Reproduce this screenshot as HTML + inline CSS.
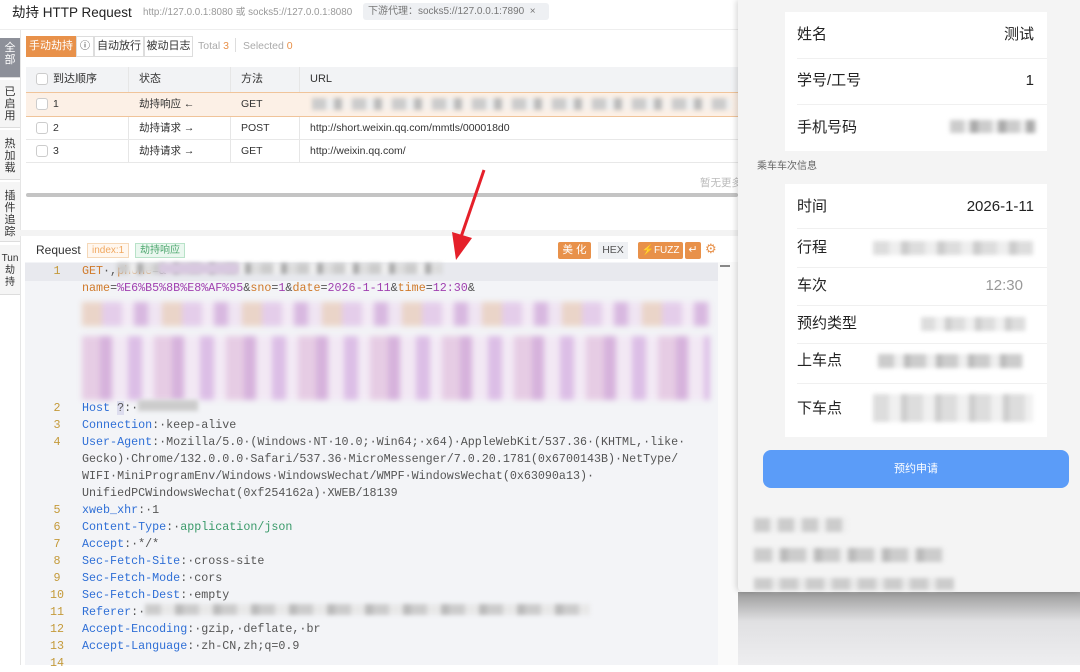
<!DOCTYPE html>
<html><head><meta charset="utf-8">
<style>
*{box-sizing:border-box;margin:0;padding:0}
body{width:1080px;height:665px;overflow:hidden;background:#fff;font-family:"Liberation Sans","Noto Sans CJK SC",sans-serif;position:relative;color:#333}
.abs{position:absolute}
.side div{position:absolute;left:0;width:20px;font-size:11px;line-height:12px;text-align:center;color:#333;background:#f5f5f5;border-bottom:1px solid #ddd;padding-top:4px}
.btn{position:absolute;top:36px;height:21px;font-size:11px;line-height:19px;border:1px solid #ddd;background:#fff;text-align:center;color:#333}
.th{position:absolute;font-size:11px;line-height:14px;color:#333}
.cb{position:absolute;width:12px;height:12px;border:1px solid #ccc;border-radius:3px;background:#fff}
.row{position:absolute;left:26px;width:712px;border-bottom:1px solid #e8e8e8;font-size:10.5px}
.row span{position:absolute;top:5px;line-height:13px}
.code{position:absolute;left:25px;top:262px;width:693px;height:403px;background:#f3f4f7;font-family:"Liberation Mono",monospace;font-size:11.7px;line-height:17px;color:#555}
.ln{position:absolute;left:22px;width:20px;text-align:center;color:#c49a3a}
.tx{position:absolute;left:57px;white-space:pre}
.k{color:#2f6fd6}
.g{color:#3a9a6a}
.o{color:#d07a2a}
.p{color:#a040b0}
.blur{position:absolute;filter:blur(2px)}
.card{position:absolute;left:785px;width:262px;background:#fff}
.lab{position:absolute;left:12px;font-size:15px;line-height:20px;color:#222}
.val{position:absolute;right:13px;font-size:15px;line-height:20px;color:#222}
.sep{position:absolute;left:12px;right:0;height:1px;background:#f0f0f0}
</style></head><body>
<!-- title -->
<div class="abs" style="left:12px;top:4px;font-size:13.5px;line-height:18px;color:#222">劫持 HTTP Request</div>
<div class="abs" style="left:143px;top:6px;font-size:9.8px;line-height:13px;color:#999;white-space:nowrap">http://127.0.0.1:8080 或 socks5://127.0.0.1:8080</div>
<div class="abs" style="left:363px;top:3px;height:17px;width:186px;background:#eef0f3;border-radius:3px;font-size:10px;color:#777;line-height:17px;padding-left:5px;white-space:nowrap">下游代理：socks5://127.0.0.1:7890 &nbsp;×</div>
<div class="abs" style="left:0;top:29px;width:738px;height:1px;background:#eee"></div>
<!-- sidebar -->
<div class="side">
<div style="top:38px;height:40px;background:#8d9099;color:#fff">全<br>部</div>
<div style="top:80px;height:48px;padding-top:6px">已<br>启<br>用</div>
<div style="top:130px;height:50px;padding-top:8px">热<br>加<br>载</div>
<div style="top:182px;height:60px;padding-top:8px">插<br>件<br>追<br>踪</div>
<div style="top:245px;height:50px;padding-top:8px;font-size:10px">Tun<br>劫<br>持</div>
</div>
<div class="abs" style="left:20px;top:30px;width:1px;height:635px;background:#e5e5e5"></div>
<!-- toolbar -->
<div class="btn" style="left:26px;width:50px;background:#e8914a;color:#fff;border-color:#e8914a">手动劫持</div>
<div class="btn" style="left:76px;width:18px;font-size:10px">ⓘ</div>
<div class="btn" style="left:94px;width:50px">自动放行</div>
<div class="btn" style="left:144px;width:49px">被动日志</div>
<div class="abs" style="left:198px;top:40px;font-size:10.5px;color:#aaa">Total <span style="color:#e8914a">3</span></div>
<div class="abs" style="left:235px;top:38px;width:1px;height:14px;background:#ddd"></div>
<div class="abs" style="left:243px;top:40px;font-size:10.5px;color:#aaa">Selected <span style="color:#e8914a">0</span></div>
<!-- table -->
<div class="abs" style="left:26px;top:67px;width:712px;height:25px;background:#f2f3f5"></div>
<div class="cb" style="left:36px;top:73px"></div>
<div class="th" style="left:53px;top:72px">到达顺序</div>
<div class="th" style="left:139px;top:72px">状态</div>
<div class="th" style="left:241px;top:72px">方法</div>
<div class="th" style="left:310px;top:72px">URL</div>
<div class="abs" style="left:128px;top:67px;width:1px;height:96px;background:#e6e6e6"></div>
<div class="abs" style="left:230px;top:67px;width:1px;height:96px;background:#e6e6e6"></div>
<div class="abs" style="left:299px;top:67px;width:1px;height:96px;background:#e6e6e6"></div>
<div class="row" style="top:92px;height:25px;background:#fcf0e6;border:1px solid #f0c49a;border-width:1px 0"><div class="cb" style="left:10px;top:5px"></div><span style="left:27px">1</span><span style="left:113px">劫持响应 ←</span><span style="left:215px">GET</span>
<div class="blur" style="left:286px;top:5px;width:420px;height:12px;background:repeating-linear-gradient(90deg,#ccc 0 14px,#eee 14px 22px,#bbb 22px 30px,#f5f0ec 30px 40px)"></div></div>
<div class="row" style="top:117px;height:23px"><div class="cb" style="left:10px;top:5px"></div><span style="left:27px">2</span><span style="left:113px">劫持请求 →</span><span style="left:215px">POST</span><span style="left:284px">http://short.weixin.qq.com/mmtls/000018d0</span></div>
<div class="row" style="top:140px;height:23px"><div class="cb" style="left:10px;top:5px"></div><span style="left:27px">3</span><span style="left:113px">劫持请求 →</span><span style="left:215px">GET</span><span style="left:284px">http://weixin.qq.com/</span></div>
<div class="abs" style="left:700px;top:175px;font-size:10.5px;color:#bbb">暂无更多</div>
<div class="abs" style="left:26px;top:193px;width:712px;height:4px;background:#c4c4c4;border-radius:2px"></div>
<div class="abs" style="left:20px;top:230px;width:718px;height:6px;background:#f3f3f3"></div>
<!-- request header -->
<div class="abs" style="left:36px;top:243px;font-size:12px;color:#333">Request</div>
<div class="abs" style="left:87px;top:243px;height:15px;padding:0 4px;border:1px solid #f5d8b8;background:#fff7ef;color:#f0a860;font-size:10px;line-height:13px">index:1</div>
<div class="abs" style="left:135px;top:243px;height:15px;padding:0 4px;border:1px solid #b8e2c8;background:#eaf7ef;color:#50a870;font-size:10px;line-height:13px">劫持响应</div>
<div class="abs" style="left:558px;top:242px;width:33px;height:17px;background:#e8914a;color:#fff;font-size:10.5px;text-align:center;line-height:17px;border-radius:2px">美 化</div>
<div class="abs" style="left:598px;top:242px;width:30px;height:17px;background:#eef0f3;color:#555;font-size:10.5px;text-align:center;line-height:17px">HEX</div>
<div class="abs" style="left:638px;top:242px;width:45px;height:17px;background:#e8914a;color:#fff;font-size:10px;text-align:center;line-height:17px;border-radius:2px">⚡FUZZ</div>
<div class="abs" style="left:685px;top:242px;width:16px;height:17px;background:#e8914a;color:#fff;font-size:11px;text-align:center;line-height:17px;border-radius:2px">↵</div>
<div class="abs" style="left:705px;top:241px;color:#e8914a;font-size:13px">⚙</div>
<!-- code -->
<div class="code">
<div class="abs" style="left:0;top:1px;width:693px;height:18px;background:#e8e9ee"></div>
<div class="ln" style="top:1px">1</div>
<div class="tx" style="top:1px"><span class="o">GET</span>·,<span class="blur" style="display:inline-block;width:325px;height:11px;vertical-align:middle;background:repeating-linear-gradient(90deg,#ccc 0 12px,#eee 12px 20px,#aaa 20px 26px,#ddd 26px 36px)"></span><span class="o">phone</span>=<span class="blur" style="display:inline-block;width:80px;height:11px;vertical-align:middle;background:#d8c8e0"></span>&amp;</div>
<div class="tx" style="top:18px"><span class="o">name</span>=<span class="p">%E6%B5%8B%E8%AF%95</span>&amp;<span class="o">sno</span>=<span class="p">1</span>&amp;<span class="o">date</span>=<span class="p">2026-1-11</span>&amp;<span class="o">time</span>=<span class="p">12:30</span>&amp;</div>
<div class="blur" style="left:57px;top:40px;width:628px;height:24px;filter:blur(3px);background:repeating-linear-gradient(90deg,#ead4c8 0 20px,#e4cdea 20px 40px,#f3eaf5 40px 52px,#d8b8e0 52px 66px,#efe4f2 66px 80px)"></div>
<div class="blur" style="left:57px;top:74px;width:628px;height:64px;filter:blur(3px);background:repeating-linear-gradient(90deg,#e6cce4 0 18px,#d6b2dc 18px 30px,#f2e8f4 30px 46px,#dcbee6 46px 60px,#f3eaf5 60px 72px)"></div>
<div class="ln" style="top:138px">2</div><div class="tx" style="top:138px"><span class="k">Host</span> <span style="background:#dde">?</span>:·<span class="blur" style="display:inline-block;width:60px;height:11px;vertical-align:middle;background:#ccc"></span></div>
<div class="ln" style="top:155px">3</div><div class="tx" style="top:155px"><span class="k">Connection</span>:·keep-alive</div>
<div class="ln" style="top:172px">4</div><div class="tx" style="top:172px"><span class="k">User-Agent</span>:·Mozilla/5.0·(Windows·NT·10.0;·Win64;·x64)·AppleWebKit/537.36·(KHTML,·like·</div>
<div class="tx" style="top:189px">Gecko)·Chrome/132.0.0.0·Safari/537.36·MicroMessenger/7.0.20.1781(0x6700143B)·NetType/</div>
<div class="tx" style="top:206px">WIFI·MiniProgramEnv/Windows·WindowsWechat/WMPF·WindowsWechat(0x63090a13)·</div>
<div class="tx" style="top:223px">UnifiedPCWindowsWechat(0xf254162a)·XWEB/18139</div>
<div class="ln" style="top:240px">5</div><div class="tx" style="top:240px"><span class="k">xweb_xhr</span>:·1</div>
<div class="ln" style="top:257px">6</div><div class="tx" style="top:257px"><span class="k">Content-Type</span>:·<span class="g">application/json</span></div>
<div class="ln" style="top:274px">7</div><div class="tx" style="top:274px"><span class="k">Accept</span>:·*/*</div>
<div class="ln" style="top:291px">8</div><div class="tx" style="top:291px"><span class="k">Sec-Fetch-Site</span>:·cross-site</div>
<div class="ln" style="top:308px">9</div><div class="tx" style="top:308px"><span class="k">Sec-Fetch-Mode</span>:·cors</div>
<div class="ln" style="top:325px">10</div><div class="tx" style="top:325px"><span class="k">Sec-Fetch-Dest</span>:·empty</div>
<div class="ln" style="top:342px">11</div><div class="tx" style="top:342px"><span class="k">Referer</span>:·<span class="blur" style="display:inline-block;width:445px;height:11px;vertical-align:middle;background:repeating-linear-gradient(90deg,#ccc 0 16px,#e8e8e8 16px 30px,#bbb 30px 38px)"></span></div>
<div class="ln" style="top:359px">12</div><div class="tx" style="top:359px"><span class="k">Accept-Encoding</span>:·gzip,·deflate,·br</div>
<div class="ln" style="top:376px">13</div><div class="tx" style="top:376px"><span class="k">Accept-Language</span>:·zh-CN,zh;q=0.9</div>
<div class="ln" style="top:393px">14</div>
</div>
<div class="abs" style="left:718px;top:262px;width:20px;height:403px;background:#fafafa"></div>
<div class="abs" style="left:720px;top:265px;width:10px;height:2px;background:#888"></div>
<!-- red arrow -->
<svg class="abs" style="left:440px;top:160px" width="60" height="110"><line x1="44" y1="10" x2="20" y2="80" stroke="#e5202a" stroke-width="3"/><polygon points="12,72 32,78 16,100" fill="#e5202a"/></svg>
<!-- right panel -->
<div class="abs" style="left:738px;top:592px;width:342px;height:73px;background:linear-gradient(#9a9a9a,#e0e0e2 40%,#eeeef0)"></div>
<div class="abs" style="left:738px;top:0;width:342px;height:592px;background:#f4f4f4;border-bottom-left-radius:6px;box-shadow:-2px 0 6px rgba(0,0,0,.15)"></div>
<div class="card" style="top:12px;height:139px">
<div class="lab" style="top:13px">姓名</div><div class="val" style="top:13px">测试</div><div class="sep" style="top:46px"></div>
<div class="lab" style="top:59px">学号/工号</div><div class="val" style="top:59px">1</div><div class="sep" style="top:92px"></div>
<div class="lab" style="top:106px">手机号码</div><div class="blur" style="left:165px;top:108px;width:86px;height:13px;background:repeating-linear-gradient(90deg,#ccc 0 14px,#eee 14px 20px,#aaa 20px 28px)"></div>
</div>
<div class="abs" style="left:757px;top:157px;font-size:10px;color:#666">乘车车次信息</div>
<div class="card" style="top:184px;height:253px">
<div class="lab" style="top:13px">时间</div><div class="val" style="top:13px">2026-1-11</div><div class="sep" style="top:44px"></div>
<div class="lab" style="top:54px">行程</div><div class="blur" style="left:88px;top:57px;width:160px;height:14px;background:repeating-linear-gradient(90deg,#ddd 0 16px,#eee 16px 28px,#ccc 28px 36px)"></div><div class="sep" style="top:83px"></div>
<div class="lab" style="top:92px">车次</div><div class="val" style="top:92px;right:24px;color:#999">12:30</div><div class="sep" style="top:121px"></div>
<div class="lab" style="top:130px">预约类型</div><div class="blur" style="left:136px;top:133px;width:105px;height:14px;background:repeating-linear-gradient(90deg,#ddd 0 14px,#f0f0f0 14px 24px,#ccc 24px 30px)"></div><div class="sep" style="top:159px"></div>
<div class="lab" style="top:167px">上车点</div><div class="blur" style="left:93px;top:170px;width:145px;height:14px;background:repeating-linear-gradient(90deg,#ccc 0 16px,#eee 16px 26px,#bbb 26px 32px)"></div><div class="sep" style="top:199px"></div>
<div class="lab" style="top:215px">下车点</div><div class="blur" style="left:88px;top:210px;width:160px;height:28px;background:repeating-linear-gradient(90deg,#ddd 0 16px,#f0f0f0 16px 28px,#ccc 28px 34px)"></div>
</div>
<div class="abs" style="left:763px;top:450px;width:306px;height:38px;background:#5b9cf8;border-radius:8px;color:#fff;font-size:11px;text-align:center;line-height:38px">预约申请</div>
<div class="blur" style="left:754px;top:518px;width:93px;height:14px;background:repeating-linear-gradient(90deg,#ccc 0 16px,#eee 16px 24px)"></div>
<div class="blur" style="left:754px;top:548px;width:190px;height:14px;background:repeating-linear-gradient(90deg,#ccc 0 18px,#eee 18px 26px,#bbb 26px 34px)"></div>
<div class="blur" style="left:754px;top:578px;width:200px;height:12px;background:repeating-linear-gradient(90deg,#ccc 0 18px,#e8e8e8 18px 26px)"></div>
</body></html>
